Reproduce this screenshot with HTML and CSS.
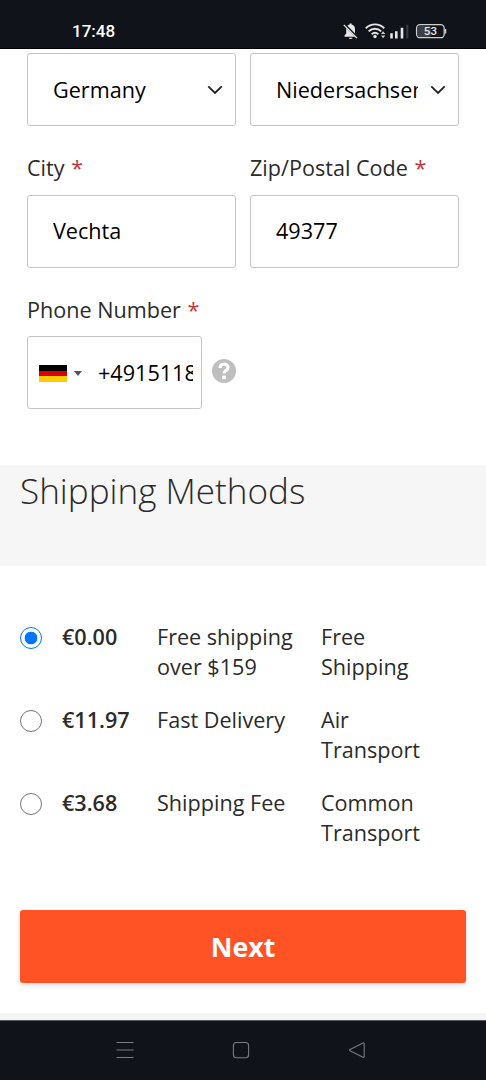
FILE: index.html
```html
<!DOCTYPE html>
<html lang="en">
<head>
<meta charset="utf-8">
<title>Checkout</title>
<link rel="stylesheet" href="styles.css">
</head>
<body>
<div class="screen">
  <header class="status">
    <span class="clock">17:48</span>
    <svg class="status-icons" viewBox="0 0 112 20" width="112" height="20">
      <path d="M2.500 14.800v-1.200l1.700-2V7.200c0-2.600 1.500-4.100 3.400-4.600V1.500h2v1.100c2 .5 3.400 2 3.400 4.600v4.400l1.700 2v1.200zM6.700 15.800h3.800c-.5 1.700-3.300 1.700-3.800 0z" fill="#e6e6e6"/>
      <path d="M2.300 2.300l13 13" stroke="#10131a" stroke-width="2.400"/>
      <path d="M1.800 2.900l13.200 13.200" stroke="#e6e6e6" stroke-width="1.300"/>
      <g fill="none" stroke="#e6e6e6" stroke-width="1.900">
        <path d="M23.800 6.300c5.200-5.200 13.400-5.200 18.400 0"/>
        <path d="M26.700 9.300c3.600-3.500 9-3.500 12.500 0"/>
        <path d="M29.700 12.200c2-1.900 4.600-1.900 6.600 0"/>
      </g>
      <circle cx="33" cy="14.500" r="1.700" fill="#e6e6e6"/>
      <path d="M39 12l2.100-2.700 2.100 2.700zM39 13.500l2.100 2.700 2.100-2.700z" fill="#d0d0d0"/>
      <path d="M48.200 11.200h2.600v5.300h-2.600zM53 9.200h2.600v7.300H53zM58.700 5.700h2.600v10.800h-2.600z" fill="#e6e6e6"/>
      <path d="M64.300 2.700h2v13.800h-2z" fill="#393c42"/>
      <rect x="75.900" y="4" width="13" height="11" rx="2" fill="#3c3f45"/>
      <rect x="74.600" y="2.600" width="27.600" height="13.100" rx="3.500" fill="none" stroke="#cfcfcf" stroke-width="1.300"/>
      <path d="M103.600 7v4.500" stroke="#cfcfcf" stroke-width="1.300"/>
      <text class="battery" x="88.400" y="13.200" text-anchor="middle">53</text>
    </svg>
  </header>

  <main>
    <form class="address">
      <div class="field">
        <div class="box"><span class="value">Germany</span>
          <svg class="chevron" viewBox="0 0 16 10" width="16" height="10"><path d="M1.300 1.300L8 8l6.700-6.700"/></svg></div>
      </div>
      <div class="field">
        <div class="box"><span class="value">Niedersachsen</span>
          <svg class="chevron" viewBox="0 0 16 10" width="16" height="10"><path d="M1.300 1.300L8 8l6.700-6.700"/></svg></div>
      </div>
      <div class="field">
        <label class="label">City <span class="req">*</span></label>
        <div class="box typed"><span class="value">Vechta</span></div>
      </div>
      <div class="field">
        <label class="label">Zip/Postal Code <span class="req">*</span></label>
        <div class="box typed"><span class="value">49377</span></div>
      </div>
      <div class="field">
        <label class="label">Phone Number <span class="req">*</span></label>
        <div class="phone-row">
          <div class="box phone">
            <span class="flag"></span>
            <span class="caret"></span>
            <span class="value">+4915118</span>
          </div>
          <svg class="help" viewBox="0 0 24 24" width="24" height="24">
            <circle cx="12" cy="12" r="12" fill="#bfbfbf"/>
            <path d="M8 9c.2-5 8-4.900 8-.6 0 3.200-4 3-4 6" fill="none" stroke="#fff" stroke-width="3.200"/>
            <rect x="10.200" y="16.600" width="3.700" height="3.500" fill="#fff"/>
          </svg>
        </div>
      </div>
    </form>

    <div class="section-head"><h2>Shipping Methods</h2></div>

    <div class="methods">
      <div class="method"><span class="radio checked"></span><span class="price">€0.00</span><span class="name">Free shipping over $159</span><span class="carrier">Free Shipping</span></div>
      <div class="method"><span class="radio"></span><span class="price">€11.97</span><span class="name">Fast Delivery</span><span class="carrier">Air Transport</span></div>
      <div class="method"><span class="radio"></span><span class="price">€3.68</span><span class="name">Shipping Fee</span><span class="carrier">Common Transport</span></div>
    </div>

    <div class="actions"><button class="next" type="button">Next</button></div>
  </main>

  <nav class="navbar">
    <svg viewBox="0 0 18 18" width="18" height="18"><path d="M.5 1.500h17M.5 9h17M.5 16.500h17"/></svg>
    <svg viewBox="0 0 18 18" width="18" height="18"><rect x="1.400" y="1.500" width="15.200" height="15.200" rx="3"/></svg>
    <svg viewBox="0 0 18 18" width="18" height="18"><path d="M15 1.900L2 8.500c-.6.300-.6.900 0 1.200l13 6.600c.6.300 1.200 0 1.200-.7V2.600c0-.7-.6-1-1.200-.7z"/></svg>
  </nav>
</div>
</body>
</html>
```
FILE: styles.css
```css
* { box-sizing: border-box; }
body {
  margin: 0;
  background: #fff;
  color: #2b2b2b;
  font: 21.600px/30.500px "Open Sans", "Noto Sans", sans-serif;
}
.screen { display: flex; flex-direction: column; height: 1080px; overflow: hidden; }
.status {
  display: flex;
  flex: none;
  justify-content: space-between;
  height: 49px;
  padding: 22px 32px 0 72px;
  background: #10131a;
  border-bottom: 1px solid #000;
}
.clock { color: #fff; font: 500 17px/19px Roboto, sans-serif; }
.status-icons { flex: none; }
.battery { fill: #e6e6e6; font: 500 11.500px Roboto, sans-serif; }

main { flex: 1; display: flex; flex-direction: column; background: #f5f5f5; }
.address {
  display: grid;
  grid-template-columns: 209px 209px;
  column-gap: 14px;
  height: 416px;
  padding: 4px 27px 0;
  background: #fff;
  align-content: start;
}
.label { display: block; height: 69px; padding-top: 27px; white-space: nowrap; }
.req { color: #c7363a; margin-left: 1px; }
.box {
  display: flex;
  align-items: center;
  height: 73px;
  padding: 1px 12px 0 25px;
  border: 1px solid #c4c4c4;
  border-radius: 3px;
  color: #000;
}
.typed { padding-top: 0; }
.value { flex: 1; min-width: 0; overflow: hidden; white-space: nowrap; }
.chevron { flex: none; margin-left: 12px; fill: none; stroke: #222; stroke-width: 1.800; }
.phone-row { display: flex; align-items: center; gap: 10px; margin-top: -1px; }
.phone { width: 175px; padding: 1px 8px 0 11px; }
.help { margin-bottom: 3px; }
.flag {
  width: 28px;
  height: 17px;
  background: linear-gradient(#000 33.300%, #d80000 33.300% 66.600%, #ffcb05 66.600%);
}
.caret {
  margin: 0 16px 0 7px;
  border: 4px solid transparent;
  border-top: 5px solid #555;
  border-bottom: 0;
}

.section-head { height: 101px; padding-left: 20px; background: #f6f6f6; }
h2 { margin: 0; font-size: 35.100px; line-height: 51px; font-weight: 300; }

.methods { height: 304px; padding: 56px 20px 0; background: #fff; line-height: 30px; }
.method {
  display: grid;
  grid-template-columns: 42px 95px 164px 120px;
  height: 83px;
}
.radio {
  width: 22px;
  height: 22px;
  margin-top: 5px;
  border: 1.500px solid #757575;
  border-radius: 50%;
}
.checked { border-color: #0075ff; background: radial-gradient(circle, #0075ff 6px, transparent 6.700px); }
.price { font-weight: 600; }
.name { padding-right: 20px; }

.actions { height: 143px; padding: 40px 20px 0; background: #fff; }
.next {
  display: block;
  width: 446px;
  height: 73px;
  padding: 1px 0 0;
  border: 0;
  border-radius: 3px;
  background: #ff5225;
  box-shadow: 0 2px 5px rgba(0, 0, 0, .15);
  color: #fff;
  font: 700 26.700px/72px "Open Sans", sans-serif;
}

.navbar {
  display: flex;
  flex: none;
  gap: 98px;
  height: 60px;
  padding: 20px 0 0 116px;
  background: #10131a;
  border-top: 1px solid #555;
}
.navbar svg { fill: none; stroke: #777b82; stroke-width: 1.100; }
```
